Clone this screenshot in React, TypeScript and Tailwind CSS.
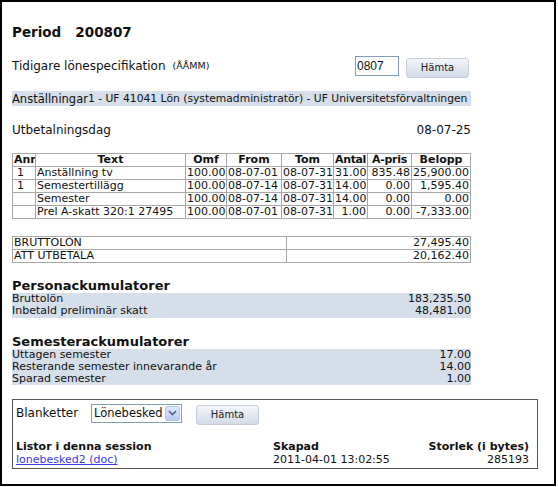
import React from "react";

const font = { fontFamily: '"DejaVu Sans", Verdana, sans-serif' };

function HamtaButton() {
  return (
    <button className="h-[20px] w-[63px] rounded-[3px] border border-[#c5cdd8] bg-gradient-to-b from-[#f4f6fa] to-[#d3dbe7] text-[10px] leading-none text-[#222]">
      Hämta
    </button>
  );
}

const rows = [
  ["1", "Anställning tv", "100.00", "08-07-01", "08-07-31", "31.00", "835.48", "25,900.00"],
  ["1", "Semestertillägg", "100.00", "08-07-14", "08-07-31", "14.00", "0.00", "1,595.40"],
  ["", "Semester", "100.00", "08-07-14", "08-07-31", "14.00", "0.00", "0.00"],
  ["", "Prel A-skatt 320:1 27495", "100.00", "08-07-01", "08-07-31", "1.00", "0.00", "-7,333.00"],
];

export default function App() {
  const td = "border border-[#a8a8a8] px-[1px] py-0 leading-[12px] whitespace-nowrap overflow-hidden";
  return (
    <div className="bg-white" style={font}>
      <div className="w-[556px] h-[486px] border-2 border-black bg-white text-[#111] pl-[10px]">
        <div className="w-[459px]">
          <div className="mt-[22px] text-[13.5px] font-bold leading-[16px]">
            Period&nbsp;&nbsp; 200807
          </div>
          <div className="mt-[16px] flex items-center h-[20px]">
            <span className="text-[12px]">Tidigare lönespecifikation</span>
            <span className="ml-[7px] text-[9.5px]">(ÅÅMM)</span>
            <input
              defaultValue="0807"
              className="ml-auto h-[20px] w-[44px] border border-[#7f9db9] px-[1px] text-[12px] outline-none"
              style={{ fontFamily: '"Liberation Sans", Arial, sans-serif' }}
            />
            <span className="ml-[7px] mr-[2px]">
              <HamtaButton />
            </span>
          </div>
          <div className="mt-[15px] h-[15px] bg-[#d5dee9] flex items-end leading-[14px] whitespace-nowrap overflow-hidden">
            <span className="text-[11.5px]">Anställningar</span>
            <span className="text-[10.75px]">1 - UF 41041 Lön (systemadministratör) - UF Universitetsförvaltningen</span>
          </div>
          <div className="mt-[16px] flex justify-between text-[12px] leading-[16px]">
            <span>Utbetalningsdag</span>
            <span>08-07-25</span>
          </div>
          <table className="mt-[15px] w-[459px] table-fixed border-collapse border border-[#888] text-[11px]">
            <colgroup>
              <col className="w-[23px]" />
              <col className="w-[150px]" />
              <col className="w-[41px]" />
              <col className="w-[55px]" />
              <col className="w-[52px]" />
              <col className="w-[34px]" />
              <col className="w-[44px]" />
              <col />
            </colgroup>
            <thead>
              <tr>
                <th className={td + " text-left font-bold"}>Anr</th>
                <th className={td + " text-center font-bold"}>Text</th>
                <th className={td + " text-center font-bold"}>Omf</th>
                <th className={td + " text-center font-bold"}>From</th>
                <th className={td + " text-center font-bold"}>Tom</th>
                <th className={td + " text-center font-bold tracking-[-0.4px]"}>Antal</th>
                <th className={td + " text-center font-bold tracking-[-0.3px]"}>Á-pris</th>
                <th className={td + " text-center font-bold"}>Belopp</th>
              </tr>
            </thead>
            <tbody>
              {rows.map((r, i) => (
                <tr key={i}>
                  <td className={td + " pl-[4px]"}>{r[0]}</td>
                  <td className={td}>{r[1]}</td>
                  <td className={td}>{r[2]}</td>
                  <td className={td}>{r[3]}</td>
                  <td className={td}>{r[4]}</td>
                  <td className={td + " text-right"}>{r[5]}</td>
                  <td className={td + " text-right"}>{r[6]}</td>
                  <td className={td + " text-right"}>{r[7]}</td>
                </tr>
              ))}
            </tbody>
          </table>
          <table className="mt-[17px] w-[459px] table-fixed border-collapse border border-[#888] text-[11px]">
            <colgroup>
              <col className="w-[274px]" />
              <col />
            </colgroup>
            <tbody>
              <tr>
                <td className={td}>BRUTTOLÖN</td>
                <td className={td + " text-right"}>27,495.40</td>
              </tr>
              <tr>
                <td className={td}>ATT UTBETALA</td>
                <td className={td + " text-right"}>20,162.40</td>
              </tr>
            </tbody>
          </table>
          <div className="mt-[15px] text-[13px] font-bold leading-[15px]">Personackumulatorer</div>
          <div className="bg-[#d5dee9] text-[11px] leading-[12px] pb-[1px]">
            <div className="flex justify-between"><span>Bruttolön</span><span>183,235.50</span></div>
            <div className="flex justify-between"><span>Inbetald preliminär skatt</span><span>48,481.00</span></div>
          </div>
          <div className="mt-[16px] text-[13px] font-bold leading-[15px]">Semesterackumulatorer</div>
          <div className="bg-[#d5dee9] text-[11px] leading-[12px]">
            <div className="flex justify-between"><span>Uttagen semester</span><span>17.00</span></div>
            <div className="flex justify-between"><span>Resterande semester innevarande år</span><span>14.00</span></div>
            <div className="flex justify-between"><span>Sparad semester</span><span>1.00</span></div>
          </div>
        </div>
        <div className="mt-[14px] w-[526px] h-[70px] border border-[#555] pl-[3px] pr-[8px] pt-[3px]">
          <div className="flex items-center h-[20px]">
            <span className="text-[12px] w-[75px]">Blanketter</span>
            <div className="flex h-[19px] w-[91px] border border-[#7f9db9] items-center">
              <span className="flex-1 pl-[2px] text-[11.5px] leading-[16px] whitespace-nowrap">Lönebesked</span>
              <span className="mr-[1px] flex h-[15px] w-[15px] items-center justify-center rounded-[2px] border border-[#b6c6e6] bg-gradient-to-b from-[#dfe8fb] to-[#b9cbf3]">
                <svg width="9" height="6" viewBox="0 0 9 6">
                  <path d="M1 1 L4.5 4.5 L8 1" fill="none" stroke="#4d6185" strokeWidth="1.6" />
                </svg>
              </span>
            </div>
            <span className="ml-[14px]">
              <HamtaButton />
            </span>
          </div>
          <div className="mt-[17px] flex text-[11px] font-bold leading-[13px]">
            <span className="w-[257px]">Listor i denna session</span>
            <span>Skapad</span>
            <span className="ml-auto">Storlek (i bytes)</span>
          </div>
          <div className="flex text-[11px] leading-[13px]">
            <span className="w-[257px]"><a className="text-[#3a3ae0] underline" href="#">lonebesked2 (doc)</a></span>
            <span>2011-04-01 13:02:55</span>
            <span className="ml-auto">285193</span>
          </div>
        </div>
      </div>
    </div>
  );
}
